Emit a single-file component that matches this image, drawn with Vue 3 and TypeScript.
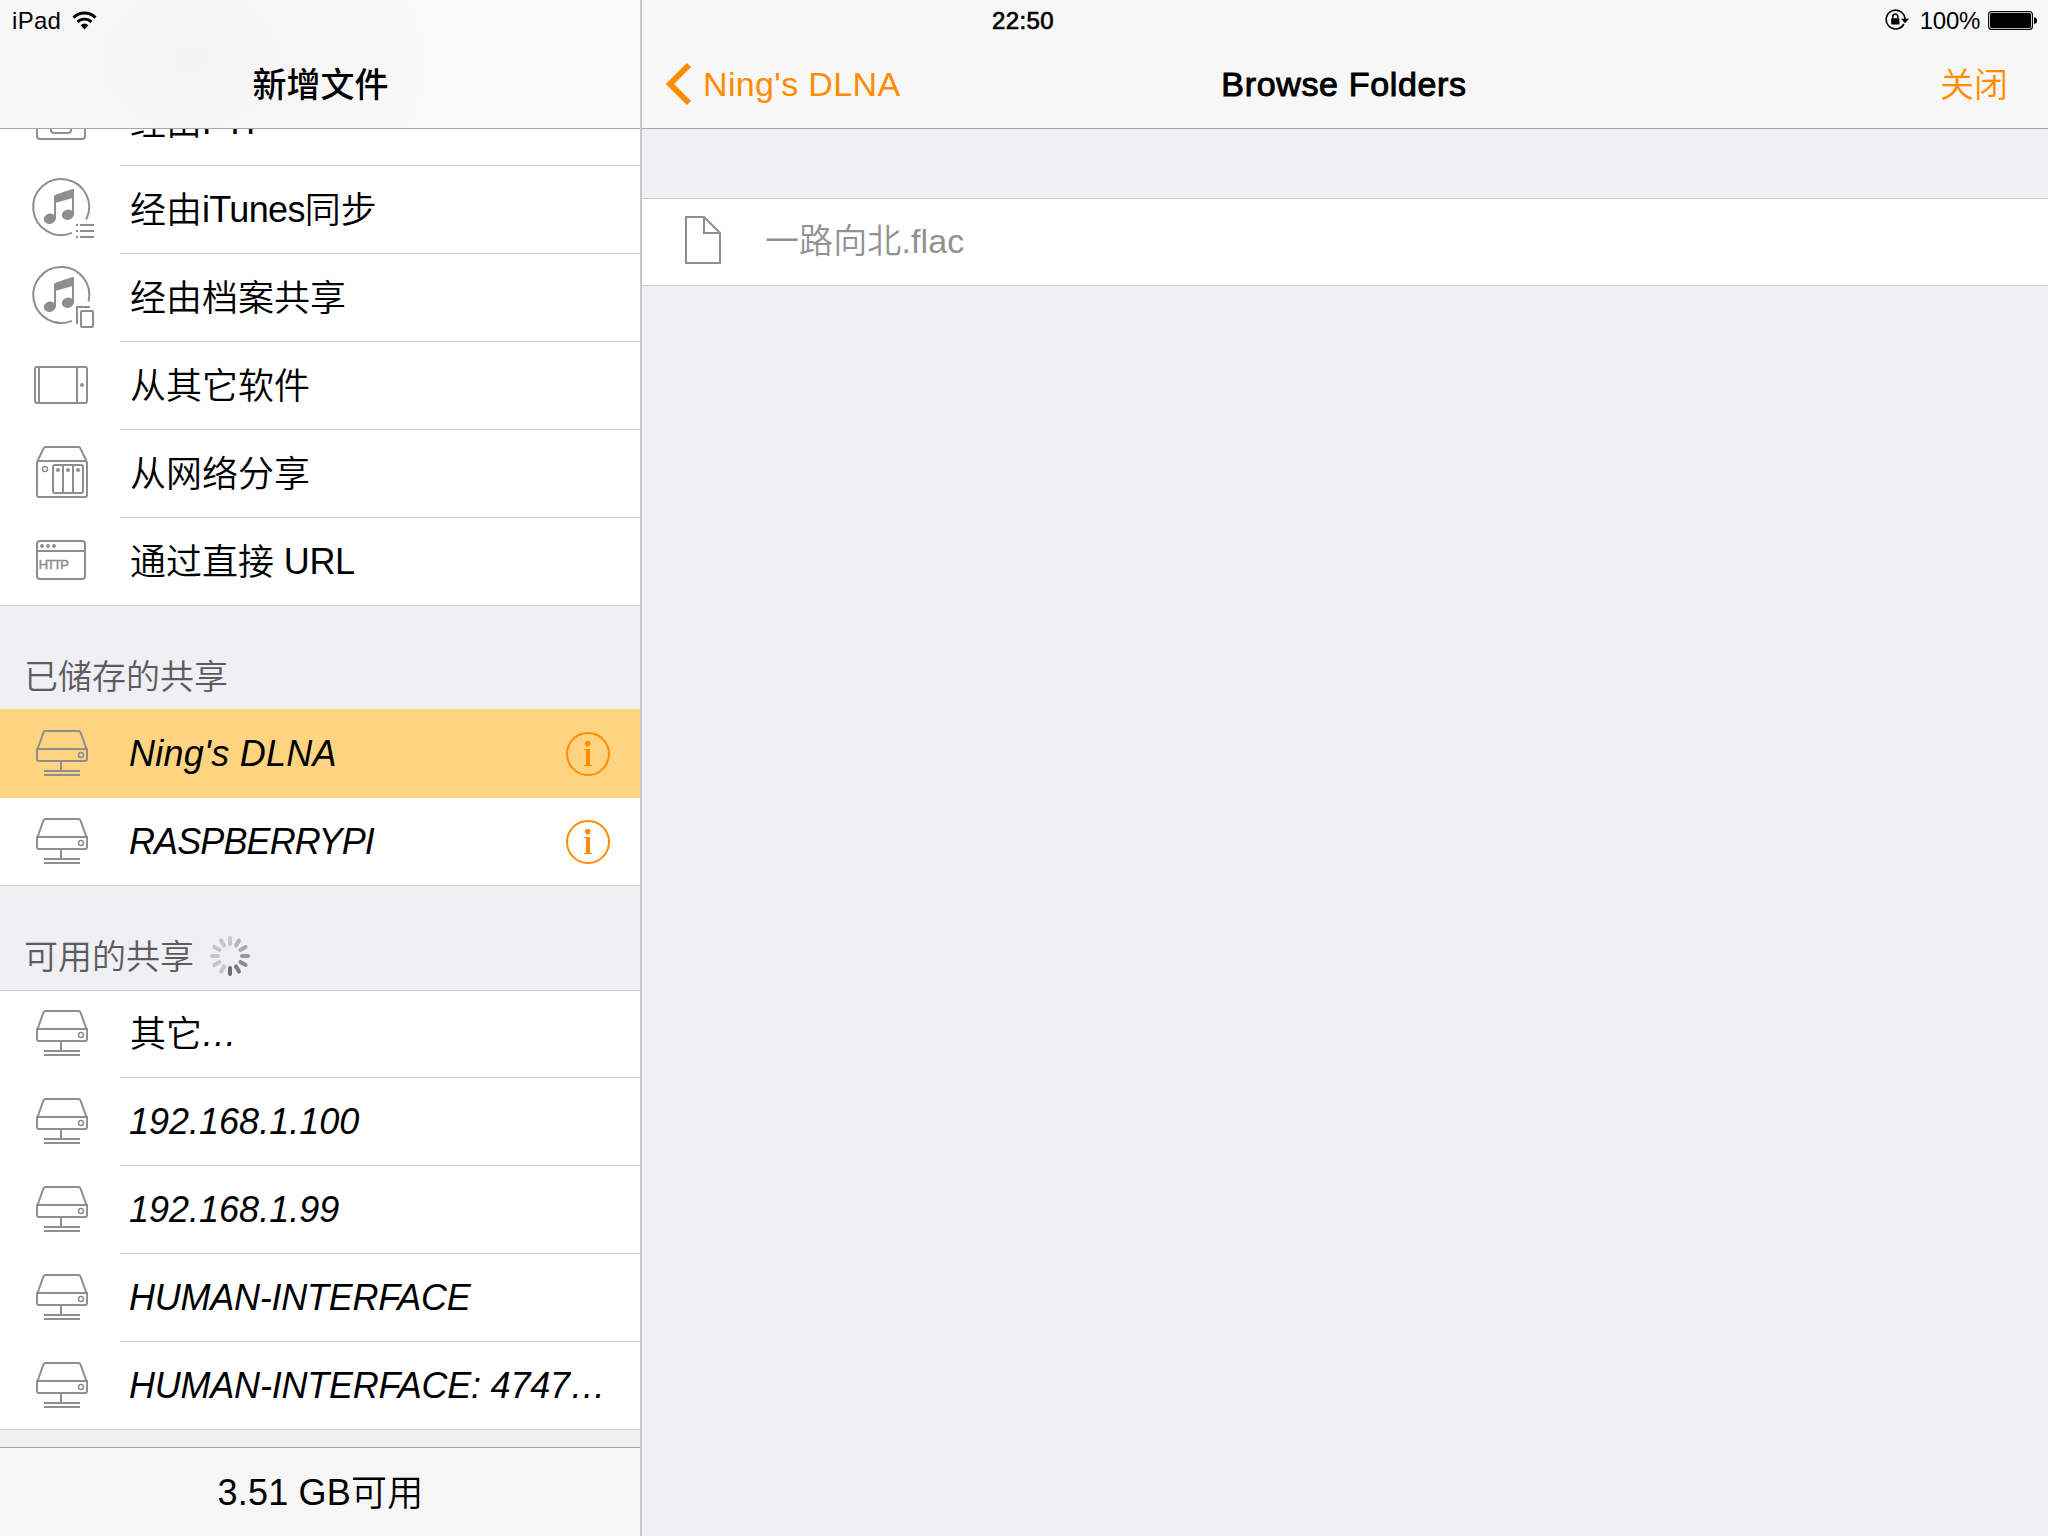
<script setup lang="ts">
import { computed } from 'vue'

type IconName = 'ftp' | 'sync' | 'share' | 'tablet' | 'nas' | 'http' | 'drive'

interface Row {
  label: string
  icon: IconName
  remote?: boolean
  selected?: boolean
  info?: boolean
  spacing?: number
}

interface Group {
  title?: string
  loading?: boolean
  kind: string
  rows: Row[]
}

const groups: Group[] = [
  {
    kind: 'sources',
    rows: [
      { label: '经由FTP', icon: 'ftp' },
      { label: '经由iTunes同步', icon: 'sync', spacing: -0.65 },
      { label: '经由档案共享', icon: 'share' },
      { label: '从其它软件', icon: 'tablet' },
      { label: '从网络分享', icon: 'nas' },
      { label: '通过直接 URL', icon: 'http', spacing: -0.3 },
    ],
  },
  {
    kind: 'saved',
    title: '已储存的共享',
    rows: [
      { label: "Ning's DLNA", icon: 'drive', remote: true, selected: true, info: true, spacing: 0.25 },
      { label: 'RASPBERRYPI', icon: 'drive', remote: true, info: true, spacing: -0.9 },
    ],
  },
  {
    kind: 'available',
    title: '可用的共享',
    loading: true,
    rows: [
      { label: '其它…', icon: 'drive', remote: true },
      { label: '192.168.1.100', icon: 'drive', remote: true },
      { label: '192.168.1.99', icon: 'drive', remote: true },
      { label: 'HUMAN-INTERFACE', icon: 'drive', remote: true, spacing: -0.25 },
      { label: 'HUMAN-INTERFACE: 4747…', icon: 'drive', remote: true, spacing: -0.22 },
    ],
  },
]

// Splits a label into Han and Latin runs, so that each script can sit on its own baseline.
function runs(label: string) {
  return (label.match(/[\u4e00-\u9fff]+|[^\u4e00-\u9fff]+/g) ?? []).map((text) => ({
    text,
    han: /[\u4e00-\u9fff]/.test(text),
  }))
}

const shades = ['#c6c6ca', '#b6b6b9', '#a8a8aa', '#98989a', '#8a8a8c', '#7b7b7d', '#6c6c6e', '#c6c6ca', '#c6c6ca', '#c6c6ca', '#c6c6ca', '#c6c6ca']
const spokes = computed(() => shades.map((color, i) => ({ color, transform: `rotate(${i * 30} 20 20)` })))
</script>

<template>
  <div class="screen">
    <aside class="sidebar">
      <header class="bar bar-left">
        <div class="status">
          <span class="device">iPad</span>
          <svg class="wifi" width="26" height="20" viewBox="0 0 26 20">
            <path d="M1.6 6.6A15.5 15.5 0 0 1 23.4 6.6" fill="none" stroke="#000" stroke-width="3" />
            <path d="M5.6 10.9A9.8 9.8 0 0 1 19.4 10.9" fill="none" stroke="#000" stroke-width="2.8" />
            <path d="M8.6 14.2Q12.5 10.8 16.4 14.2L12.5 18.4Z" />
          </svg>
        </div>
        <h1 class="title cjk-title">新增文件</h1>
      </header>

      <div class="list">
        <div class="list-inner">
          <section v-for="g in groups" :key="g.kind" :class="g.kind">
            <div v-if="g.title" class="heading">
              <span>{{ g.title }}</span>
              <svg v-if="g.loading" class="spinner" width="40" height="40" viewBox="0 0 40 40">
                <line
                  v-for="(s, i) in spokes"
                  :key="i"
                  x1="20"
                  y1="2"
                  x2="20"
                  y2="8"
                  :stroke="s.color"
                  stroke-width="4"
                  stroke-linecap="round"
                  :transform="s.transform"
                />
              </svg>
            </div>
            <div class="group">
              <div v-for="r in g.rows" :key="r.label" class="row" :class="{ selected: r.selected, remote: r.remote }">
                <svg class="icon" width="120" height="88" viewBox="0 0 120 88" fill="none" stroke="#8e8e8e" stroke-width="2">
                  <template v-if="r.icon === 'ftp'">
                    <rect x="37" y="25" width="48" height="36" rx="3" />
                    <rect x="51" y="37" width="20" height="18" rx="3" />
                    <path d="M57 46l4 4 4-4" />
                  </template>
                  <template v-else-if="r.icon === 'sync' || r.icon === 'share'">
                    <path v-if="r.icon === 'sync'" d="M72 66.8A28 28 0 1 1 86.2 53.5" />
                    <path v-else d="M72 66.8A28 28 0 1 1 88.5 47.5" />
                    <g fill="#8e8e8e" stroke="none">
                      <ellipse cx="49.8" cy="52.7" rx="6.1" ry="5.1" transform="rotate(-14 49.8 52.7)" />
                      <ellipse cx="67.8" cy="48.7" rx="6.1" ry="5.1" transform="rotate(-14 67.8 48.7)" />
                      <path d="M54 53V31Q54 29.3 55.6 28.7L72.3 23Q74 22.5 74 24V49H72V32.2L56 36.8V53Z" />
                    </g>
                    <template v-if="r.icon === 'sync'">
                      <path d="M76 59h2M80 59h14M76 65h2M80 65h14M76 71h2M80 71h14" />
                    </template>
                    <template v-else>
                      <path d="M77 70V53H90" />
                      <rect x="81" y="57" width="12" height="16" rx="1" />
                    </template>
                  </template>
                  <template v-else-if="r.icon === 'tablet'">
                    <rect x="35" y="25" width="52" height="36" rx="2" />
                    <path d="M39 25V61M77 25V61" />
                    <circle cx="82" cy="43" r="2" fill="#8e8e8e" stroke="none" />
                  </template>
                  <template v-else-if="r.icon === 'nas'">
                    <path d="M37.5 31L43.6 18.4Q44.2 17 45.6 17H78.4Q79.8 17 80.4 18.4L86.5 31" />
                    <rect x="37" y="31" width="50" height="36" rx="2" />
                    <circle cx="45" cy="39" r="2.5" stroke-width="1.5" />
                    <rect x="53" y="35" width="30" height="28" rx="2" />
                    <path d="M63 35V63M73 35V63" />
                    <g fill="#8e8e8e" stroke="none">
                      <circle cx="58" cy="40" r="2" />
                      <circle cx="68" cy="40" r="2" />
                      <circle cx="78" cy="40" r="2" />
                    </g>
                  </template>
                  <template v-else-if="r.icon === 'http'">
                    <rect x="37" y="23" width="48" height="38" rx="3" />
                    <path d="M37 33H85" />
                    <g fill="#8e8e8e" stroke="none">
                      <circle cx="42" cy="28" r="2" />
                      <circle cx="48" cy="28" r="2" />
                      <circle cx="54" cy="28" r="2" />
                    </g>
                    <text class="http" x="38.7" y="50.5">HTTP</text>
                  </template>
                  <template v-else>
                    <path d="M37.2 40L43.5 22.3Q44 21 45.4 21H78.6Q80 21 80.5 22.3L86.8 40" />
                    <path d="M37 39H87V49Q87 51 85 51H39Q37 51 37 49Z" />
                    <circle cx="81" cy="45" r="2.5" stroke-width="1.6" />
                    <path d="M61 51V61M44 61H80M44 65H80" />
                  </template>
                </svg>
                <span class="label">
                  <span
                    v-for="(run, i) in runs(r.label)"
                    :key="i"
                    :class="run.han ? 'han' : 'latin'"
                    :style="run.han ? undefined : { letterSpacing: `${r.spacing ?? 0}px` }"
                  >{{ run.text }}</span>
                </span>
                <svg v-if="r.info" class="info" width="44" height="44" viewBox="0 0 44 44" fill="#ff8c00">
                  <circle cx="22" cy="22" r="21" fill="none" stroke="#ff8c00" stroke-width="2" />
                  <circle cx="21.7" cy="11.6" r="2.8" />
                  <rect x="20" y="17" width="4" height="17" />
                  <rect x="18" y="17" width="3" height="1" />
                  <rect x="18" y="33" width="8" height="1" />
                </svg>
              </div>
            </div>
          </section>
        </div>
      </div>

      <footer class="footer">3.51 GB<span class="han">可用</span></footer>
    </aside>

    <main class="detail">
      <header class="bar bar-right">
        <div class="status">
          <span class="clock">22:50</span>
          <div class="indicators">
            <svg width="24" height="22" viewBox="0 0 24 22">
              <path d="M18.9 15A9.4 9.4 0 1 1 20 10.6" fill="none" stroke="#000" stroke-width="1.6" />
              <path d="M16 9.8H24L20 14.2Z" />
              <rect x="6.2" y="9.2" width="8.2" height="6.4" rx=".6" />
              <path d="M7.8 9.6V7.5A2.5 2.5 0 0 1 12.8 7.5V9.6" fill="none" stroke="#000" stroke-width="1.5" />
            </svg>
            <span class="percent">100%</span>
            <svg class="battery" width="50" height="20" viewBox="0 0 50 20">
              <rect x=".6" y=".6" width="43.8" height="17.8" rx="3" fill="none" stroke="#000" stroke-width="1.1" />
              <rect x="2" y="2" width="41" height="15" rx="1.6" />
              <path d="M46 6Q49 6.5 49 9.5T46 13Z" />
            </svg>
          </div>
        </div>
        <div class="nav">
          <div class="back">
            <svg width="27" height="44" viewBox="0 0 27 44">
              <path d="M24 3L5 22L24 41" fill="none" stroke="#ff8c00" stroke-width="6" />
            </svg>
            <span>Ning's DLNA</span>
          </div>
          <h2 class="title">Browse Folders</h2>
          <div class="close"><span class="han">关闭</span></div>
        </div>
      </header>
      <div class="file-row">
        <svg width="123" height="88" viewBox="0 0 123 88" fill="none" stroke="#8e8e8e" stroke-width="2">
          <path d="M44 19H62L78 35V65H44Z" />
          <path d="M62 19V35H78" />
        </svg>
        <span class="file-name"><span>一路向北</span>.flac</span>
      </div>
    </main>
  </div>
</template>

<style>
body {
  margin: 0;
}
</style>

<style scoped>
.screen {
  display: flex;
  width: 2048px;
  height: 1536px;
  overflow: hidden;
  background: #efeff4;
  color: #000;
  font-family: 'Liberation Sans', 'Noto Sans CJK SC', sans-serif;
  font-weight: 350;
  font-synthesis: none;
  white-space: nowrap;
}
svg {
  display: block;
  flex: none;
}
.han {
  position: relative;
  top: 1px;
}
.sidebar {
  display: flex;
  flex-direction: column;
  width: 640px;
  border-right: 2px solid #c8c7cc;
}
.bar {
  box-sizing: border-box;
  flex: none;
  height: 129px;
  border-bottom: 1px solid #a7a7aa;
}
.bar-left {
  background: radial-gradient(ellipse 240px 190px at 190px 60px, #f4f4f4, #f9f9f9);
}
.bar-right {
  background: #f7f7f7;
}
.status {
  display: flex;
  align-items: center;
  height: 40px;
  font-size: 24px;
  line-height: 41px;
}
.device {
  margin-left: 12px;
  letter-spacing: 0.3px;
}
.wifi {
  margin-top: 2px;
  margin-left: 11px;
}
.title {
  margin: 0;
  font-size: 34px;
  line-height: 88px;
  font-weight: 400;
  letter-spacing: 0.65px;
  -webkit-text-stroke: 1px #000;
}
.cjk-title {
  padding: 1px 0 0 1px;
  text-align: center;
  font-weight: 500;
  letter-spacing: 0;
  -webkit-text-stroke: 0;
}
.list {
  flex: 1;
  min-height: 0;
  overflow: hidden;
}
.list-inner {
  margin-top: -51px;
}
.group {
  position: relative;
  background: #fff;
}
.group::after {
  content: '';
  position: absolute;
  left: 0;
  right: 0;
  bottom: 0;
  height: 1px;
  background: #c8c7cc;
}
.available .group::before {
  content: '';
  position: absolute;
  left: 0;
  right: 0;
  top: 0;
  height: 1px;
  background: #c8c7cc;
}
.row {
  position: relative;
  display: flex;
  align-items: center;
  height: 88px;
}
.row:not(:last-child):not(.selected)::after {
  content: '';
  position: absolute;
  left: 120px;
  right: 0;
  bottom: 0;
  height: 1px;
  background: #c8c7cc;
}
.selected {
  padding-top: 1px;
  background: #ffd480;
}
.label {
  display: flex;
  flex: 1;
  padding-left: 10px;
  font-size: 36px;
  line-height: 88px;
}
.latin {
  white-space: pre;
}
.remote .label {
  font-style: italic;
}
.remote .latin {
  margin-left: -1px;
}
.info {
  margin-right: 30px;
}
.http {
  fill: #8e8e8e;
  stroke: #8e8e8e;
  stroke-width: 0.5px;
  font-family: 'Liberation Sans', sans-serif;
  font-size: 13px;
  letter-spacing: -1.2px;
}
.heading {
  display: flex;
  align-items: center;
  box-sizing: border-box;
  height: 103px;
  padding: 40px 0 0 24px;
  color: #5c5c60;
  font-size: 34px;
  line-height: 63px;
}
.available .heading {
  height: 104px;
  padding-top: 39px;
}
.spinner {
  margin: -3px 0 0 16px;
}
.footer {
  box-sizing: border-box;
  flex: none;
  height: 89px;
  border-top: 1px solid #a7a7aa;
  background: #f6f6f7;
  font-size: 36px;
  line-height: 90px;
  text-align: center;
  padding-left: 1px;
  letter-spacing: 0.2px;
}
.detail {
  flex: 1;
  min-width: 0;
}
.clock {
  margin-left: 350px;
  font-weight: 400;
  letter-spacing: 0.4px;
  -webkit-text-stroke: 0.7px #000;
}
.indicators {
  display: flex;
  align-items: center;
  margin-left: auto;
  padding-right: 10px;
}
.percent {
  margin-left: 11px;
  letter-spacing: -0.3px;
}
.battery {
  margin: 2px 0 0 8px;
}
.nav {
  display: grid;
  grid-template-columns: 1fr auto 1fr;
  align-items: center;
  height: 88px;
}
.nav .title {
  margin-right: 2px;
}
.back {
  display: flex;
  align-items: center;
  padding-left: 23px;
  color: #ff8c00;
  font-size: 34px;
  line-height: 88px;
  letter-spacing: 0.35px;
}
.back span {
  margin-left: 11px;
}
.close {
  padding-right: 40px;
  color: #ff8c00;
  font-size: 34px;
  line-height: 88px;
  text-align: right;
}
.file-row {
  box-sizing: border-box;
  display: flex;
  height: 88px;
  margin-top: 69px;
  background: #fff;
  box-shadow: inset 0 1px #c8c7cc, inset 0 -1px #c8c7cc;
}
.file-name {
  color: #929292;
  font-size: 34px;
  line-height: 86px;
  letter-spacing: 0.1px;
}
</style>
